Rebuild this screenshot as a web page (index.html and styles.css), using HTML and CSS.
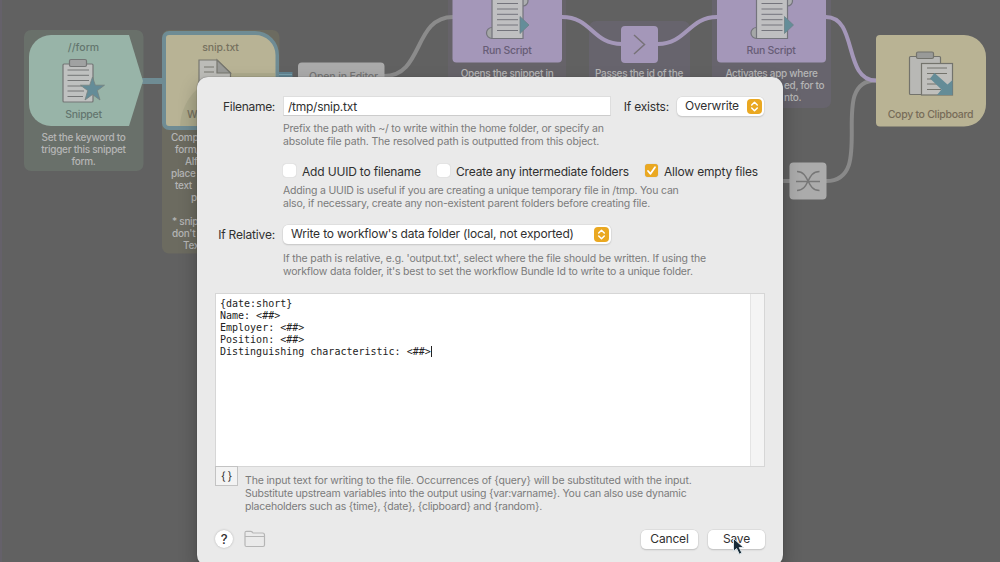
FILE: index.html
```html
<!DOCTYPE html>
<html lang="en">
<head>
<meta charset="utf-8">
<title>Workflow Editor</title>
<link rel="stylesheet" href="styles.css">
</head>
<body>
<main class="canvas">
  <svg class="wires" width="1000" height="562" viewBox="0 0 1000 562">
    <rect x="24" y="30" width="119.500" height="141" rx="7" fill="#69706a"/>
    <rect x="162" y="30" width="117.500" height="223.500" rx="7" fill="#6c6b60"/>
    <rect x="448" y="-10" width="118" height="150" rx="7" fill="#666369"/>
    <rect x="589" y="21" width="101" height="120" rx="7" fill="#67646d"/>
    <rect x="712" y="-10" width="119" height="118" rx="7" fill="#67646d"/>
    <path d="M140 81H164" stroke="#6f8c94" stroke-width="6"/>
    <path d="M276 75H292.500" stroke="#608391" stroke-width="6"/>
    <path d="M277 74.500H292" stroke="#78a0ad" stroke-width="1"/>
    <g fill="none" stroke-width="4">
      <path d="M384 76C424 76 413 17 453 17" stroke="#8b8b8b"/>
      <path d="M562 17C592 17 592 44 622 44" stroke="#a497b9"/>
      <path d="M658 44C686 44 689 17 717 17" stroke="#a497b9"/>
      <path d="M783 181H790M826 181C878 181 826 80.500 876 80.500" stroke="#898989"/>
      <path d="M826 17C858 17 843 80.500 876 80.500" stroke="#a497b9"/>
    </g>
    <path d="M51 35H129L143 81L129 126H51A22 22 0 0 1 29 104V57A22 22 0 0 1 51 35Z" fill="#98b4a8"/>
    <path d="M169 31H255A24 24 0 0 1 279 55V130H169A7 7 0 0 1 162 123V38A7 7 0 0 1 169 31Z" fill="#6f8c94"/>
    <path d="M169 35H255A20 20 0 0 1 275.500 55V126H169A3 3 0 0 1 166 123V38A3 3 0 0 1 169 35Z" fill="#b8b395"/>
    <path d="M180 126C181 98 205 73 240 73H275V126Z" fill="#adaa8c"/>
    <rect x="298" y="62.500" width="86.500" height="30" rx="4" fill="#aaa"/>
    <rect x="452.500" y="-20" width="109.500" height="82.500" rx="4" fill="#a497b9"/>
    <rect x="621" y="26" width="37" height="37" rx="4" fill="#a497b9"/>
    <rect x="717" y="-20" width="109" height="82.500" rx="4" fill="#a497b9"/>
    <path d="M880 35H964A22 22 0 0 1 986 57V104A22 22 0 0 1 964 126.500H880A4 4 0 0 1 876 122.500V39A4 4 0 0 1 880 35Z" fill="#b9b394"/>
    <rect x="789.500" y="162.500" width="37" height="37" rx="4" fill="#ababab"/>

    <g stroke="#747676" stroke-width="1.200">
      <rect x="63" y="64" width="30" height="38" rx="1" fill="#bfc1c0"/>
      <rect x="69.500" y="59.500" width="17" height="7" rx="1.500" fill="#a0a2a2"/>
      <path d="M67.500 70H89M67.500 75.300H89M67.500 80.500H89M67.500 86H82M67.500 91H84M67.500 96.500H83" stroke-width="1"/>
    </g>
    <path d="M92.500 77L95.300 85.200H104.500L97.300 90.600L100 100L92.500 94.500L85 100L87.700 90.600L80.500 85.200H89.700Z" fill="#648c98" stroke="#76817f" stroke-width=".8"/>

    <g stroke="#77776f" stroke-width="1.200">
      <path d="M199 60H217L230.500 73V90H199Z" fill="#bcbcb8"/>
      <path d="M217 60V73H230.500Z" fill="#999a97"/>
      <path d="M204 67H214M204 72H214" stroke-width="1"/>
    </g>

    <g id="script">
      <g stroke="#74747c" stroke-width="1.200">
        <circle cx="523" cy="1" r="5" fill="#acaeb0"/>
        <circle cx="492" cy="33" r="5.500" fill="#a5a7a7"/>
        <path d="M492 -3H523V38.500H492Z" fill="#bfbfc1"/>
        <path d="M497 -2H518M497 3.500H518M497 9H518M497 14.300H518M497 19.700H518M497 25H518M497 30.500H518" stroke-width="1"/>
      </g>
      <path d="M520 16.500L529 25L520 33.500Z" fill="#648d99" stroke="#6c8187" stroke-width=".8"/>
    </g>
    <use href="#script" x="264.500"/>
    <path d="M634 35L644.500 44.500L634 54" fill="none" stroke="#777278" stroke-width="1.500"/>

    <g stroke="#73736c" stroke-width="1.200">
      <rect x="909.500" y="56.500" width="31" height="38" rx="1" fill="#b8b8b5"/>
      <rect x="916.500" y="52" width="17" height="6.500" rx="1.500" fill="#999a98"/>
      <rect x="921.500" y="63.500" width="31" height="31.500" fill="#bfbfbc"/>
      <path d="M927 68H947M927 73.500H947M927 79H937M927 84H937M927 89.500H941" stroke-width="1"/>
    </g>
    <path d="M934.500 73L930 78.500L941.500 89.500L937 95H952.500V80L947.500 84.500Z" fill="#648c97"/>

    <path d="M796 181.500H820M797 171.500C810 171.500 806 190.500 819.500 190.500M819.500 171.500C806 171.500 810 190.500 797 190.500" fill="none" stroke="#777" stroke-width="1.400"/>
  </svg>

  <p class="node-text on-green keyword">//form</p>
  <p class="node-text on-green snippet">Snippet</p>
  <p class="node-text note snippet-note">Set the keyword to<br>trigger this snippet<br>form.</p>
  <p class="node-text on-sand file-title">snip.txt</p>
  <p class="node-text on-sand file-kind">W</p>
  <div class="node-text note file-note">
    <span>Comp</span>
    <span class="in-2">form/</span>
    <span class="in-4">Alf</span>
    <span>place</span>
    <span class="in-2">text</span>
    <span class="in-5">p</span>
    <span class="gap in-1">* snip</span>
    <span class="in-1">don't</span>
    <span class="in-3">Tex</span>
  </div>
  <p class="node-text on-gray editor">Open in Editor</p>
  <p class="node-text on-purple script-one">Run Script</p>
  <p class="node-text note script-one-note">Opens the snippet in</p>
  <p class="node-text note pass-note">Passes the id of the</p>
  <p class="node-text on-purple script-two">Run Script</p>
  <p class="node-text note script-two-note">Activates app where</p>
  <p class="node-text note script-two-rest">ed, for to<br>nto.</p>
  <p class="node-text on-clipboard clipboard">Copy to Clipboard</p>

  <section class="dialog">
    <div class="row row-name">
      <span class="label w-filename">Filename:</span>
      <div class="field">/tmp/snip.txt</div>
      <span class="label-inline">If exists:</span>
      <div class="select select-small"><span>Overwrite</span>
        <svg class="stepper" viewBox="0 0 15 15"><path d="M4.700 6L7.500 3.300L10.300 6M4.700 9L7.500 11.700L10.300 9"/></svg>
      </div>
    </div>
    <p class="hint hint-name">Prefix the path with ~/ to write within the home folder, or specify an<br><span class="loose">absolute file path. The resolved path is outputted from this object.</span></p>
    <div class="row checks">
      <span class="check"></span><span class="check-label c1">Add UUID to filename</span>
      <span class="check"></span><span class="check-label c2">Create any intermediate folders</span>
      <span class="check checked"><svg viewBox="0 0 13 13"><path d="M3 7L5.500 9.800L10 3.300"/></svg></span><span class="check-label">Allow empty files</span>
    </div>
    <p class="hint hint-uuid">Adding a UUID is useful if you are creating a unique temporary file in /tmp. You can<br>also, if necessary, create any non-existent parent folders before creating file.</p>
    <div class="row row-relative">
      <span class="label">If Relative:</span>
      <div class="select select-wide"><span>Write to workflow's data folder (local, not exported)</span>
        <svg class="stepper" viewBox="0 0 15 15"><path d="M4.700 6L7.500 3.300L10.300 6M4.700 9L7.500 11.700L10.300 9"/></svg>
      </div>
    </div>
    <p class="hint hint-relative"><span class="loose">If the path is relative, e.g. 'output.txt', select where the file should be written. If using the</span><br>workflow data folder, it's best to set the workflow Bundle Id to write to a unique folder.</p>
    <div class="editor-box">
      <pre class="code">{date:short}
Name: &lt;##&gt;
Employer: &lt;##&gt;
Position: &lt;##&gt;
Distinguishing characteristic: &lt;##&gt;<span class="caret"></span></pre>
      <div class="scroll-track"></div>
    </div>
    <div class="under">
      <span class="braces">{&thinsp;}</span>
      <p class="hint hint-input"><span class="loose">The input text for writing to the file. Occurrences of {query} will be substituted with the input.</span><br><span class="tight">Substitute upstream variables into the output using {var:varname}. You can also use dynamic</span><br><span class="tight">placeholders such as {time}, {date}, {clipboard} and {random}.</span></p>
    </div>
    <footer class="actions">
      <span class="help">?</span>
      <svg class="folder" width="22" height="18" viewBox="0 0 22 18"><path d="M1 15V2.800Q1 1.300 2.500 1.300H6.800Q7.600 1.300 8.200 2L9 3H18.500Q20.500 3 20.500 5V15Q20.500 16.500 19 16.500H2.500Q1 16.500 1 15ZM1 6.500H20.500"/></svg>
      <span class="button cancel">Cancel</span>
      <span class="button">Save</span>
    </footer>
  </section>

  <svg class="pointer" width="14" height="20" viewBox="0 0 14 20"><path d="M1.500 1.500V14.200L4.600 11.500L7.300 17.200L9.900 16L7.200 10.500H11.600Z"/></svg>
</main>
</body>
</html>
```

FILE: styles.css
```css
* { box-sizing: border-box; }
body { margin: 0; overflow: hidden; font-family: Inter, "Liberation Sans", sans-serif; }
p, pre { margin: 0; }

.canvas { position: relative; width: 1000px; height: 562px; overflow: hidden; background: #616161; }
.canvas::before { content: ""; position: absolute; left: 0; top: 0; width: 2px; height: 562px; background: #65616a; }
.wires { position: absolute; left: 0; top: 0; }

/* Node captions on the workflow canvas */
.node-text { position: absolute; font-size: 10.500px; line-height: 12px; font-weight: 500; letter-spacing: -.29px; text-align: center; white-space: nowrap; transform: translateX(-50%); }
.note { color: #b5b5b5; font-size: 10px; }
.on-green { color: #64766f; }
.on-sand { color: #76715f; }
.on-purple { color: #675d76; }
.on-gray { color: #747474; }
.on-clipboard { color: #776c58; }
.keyword { left: 83.500px; top: 42px; letter-spacing: 0; }
.snippet { left: 83.500px; top: 108.500px; }
.snippet-note { left: 83.500px; top: 131px; }
.file-title { left: 220.500px; top: 42px; letter-spacing: -.1px; }
.file-kind { left: 192px; top: 108.500px; }
.file-note { left: 171px; top: 131px; transform: none; display: flex; flex-direction: column; align-items: flex-start; }
.gap { margin-top: 12px; }
.in-1 { padding-left: 1px; }
.in-2 { padding-left: 4px; }
.in-3 { padding-left: 12px; }
.in-4 { padding-left: 14px; }
.in-5 { padding-left: 20px; }
.editor { left: 343.500px; top: 71px; letter-spacing: -.15px; }
.script-one { left: 507px; top: 44.500px; }
.script-one-note { left: 507px; top: 67px; }
.pass-note { left: 639px; top: 67px; }
.script-two { left: 771px; top: 44.500px; }
.script-two-note { left: 771.500px; top: 67px; }
.script-two-rest { left: 784px; top: 79px; transform: none; text-align: left; }
.clipboard { left: 930.500px; top: 108.500px; }

/* Settings sheet */
.dialog { position: absolute; left: 197px; top: 77px; width: 586px; height: 489px; padding: 18px 18px 0; border-radius: 11px; background: #eaeaea; color: #303030; font-size: 12px; letter-spacing: -.18px; box-shadow: 0 0 1px #333, 0 8px 18px rgba(0,0,0,.28); display: flex; flex-direction: column; }
.row { display: flex; align-items: center; white-space: nowrap; flex: none; }
.row-name { height: 22px; }
.label { width: 60px; margin-right: 8px; display: flex; justify-content: flex-end; }
.w-filename { letter-spacing: -.3px; }
.field { width: 328px; height: 20px; padding-left: 4px; line-height: 20px; letter-spacing: -.25px; background: #fff; border: 1px solid #dedede; border-bottom-color: #ccc; }
.label-inline { width: 58px; display: flex; justify-content: flex-end; }
.select { display: flex; align-items: center; justify-content: space-between; height: 19px; padding: 0 2px 0 8px; border-radius: 5px; background: #fff; box-shadow: 0 0 0 .5px #d5d5d5, 0 1px 1.500px #bcbcbc; }
.select span { padding-bottom: 1px; }
.select-small { width: 87px; margin-left: 8px; }
.select-wide { width: 328px; }
.stepper { width: 15px; height: 15px; border-radius: 4px; background: #eaa821; fill: none; stroke: #fff; stroke-width: 1.500; stroke-linecap: round; stroke-linejoin: round; }

.hint { color: #7b7b7b; font-size: 10.500px; line-height: 13px; letter-spacing: -.19px; white-space: nowrap; flex: none; }
.loose { letter-spacing: -.15px; }
.tight { letter-spacing: -.22px; }
.hint-name { margin: 5px 0 0 68px; }
.checks { height: 18px; margin: 14px 0 0 68px; }
.check { width: 13px; height: 13px; margin-right: 6px; margin-bottom: 1px; border-radius: 3px; background: #fff; box-shadow: 0 0 1px #aaa; display: flex; }
.check.checked { background: #eaa821; }
.check svg { width: 13px; height: 13px; fill: none; stroke: #fff; stroke-width: 1.800; stroke-linecap: round; stroke-linejoin: round; }
.c1 { width: 135px; }
.c2 { width: 189px; }
.hint-uuid { margin: 4px 0 0 68px; }
.row-relative { height: 20px; margin-top: 14px; }
.hint-relative { margin: 8px 0 0 68px; }

.editor-box { flex: none; display: flex; width: 550px; height: 174px; margin-top: 15px; background: #fff; border: 1px solid #d6d6d6; }
.code { flex: 1; padding: 4px 0 0 4px; color: #222; font: 10px/11.900px "DejaVu Sans Mono", monospace; letter-spacing: 0; }
.caret { display: inline-block; width: 1px; height: 11px; background: #222; vertical-align: -2px; }
.scroll-track { width: 14px; background: #f4f4f4; border-left: 1px solid #e4e4e4; }
.under { display: flex; align-items: flex-start; }
.braces { width: 23px; height: 20px; margin-top: -1px; border: 1px solid #c3c3c3; background: #f3f3f3; text-align: center; font-size: 11px; line-height: 18px; }
.hint-input { margin: 7px 0 0 7px; }
.actions { display: flex; align-items: center; height: 20px; margin-top: 16px; }
.help { width: 18px; height: 18px; border-radius: 50%; background: #fff; box-shadow: 0 0 2px #aaa; text-align: center; font-size: 13px; line-height: 18px; font-weight: 500; }
.folder { margin-left: 11px; fill: none; stroke: #b5b5b5; stroke-width: 1.200; }
.button { width: 57px; height: 19px; border-radius: 5px; background: #fff; box-shadow: 0 0 0 .5px #d2d2d2, 0 1px 1.500px #b5b5b5; display: flex; justify-content: center; align-items: center; padding-bottom: 1px; }
.cancel { margin: 0 10px 0 auto; }
.pointer { position: absolute; left: 732px; top: 537px; fill: #182b38; stroke: #dce5e9; stroke-width: 1; }
```
